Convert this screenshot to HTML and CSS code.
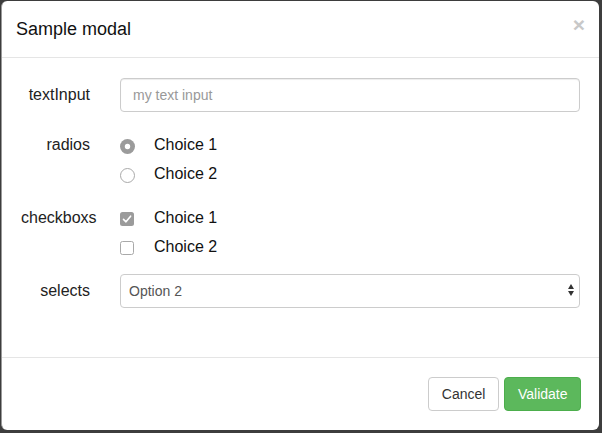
FILE: index.html
```html
<!DOCTYPE html>
<html lang="en">
<head>
<meta charset="utf-8">
<title>Sample modal</title>
<link rel="stylesheet" href="styles.css">
</head>
<body>
<div class="modal">
  <div class="modal-header">
    <h4 class="modal-title">Sample modal</h4>
    <button class="close" type="button">&times;</button>
  </div>
  <div class="modal-body">
    <div class="group group-text">
      <label class="label label-tall">textInput</label>
      <input class="input" type="text" placeholder="my text input">
    </div>
    <div class="group group-radios">
      <label class="label">radios</label>
      <div class="options">
        <div class="option">
          <svg class="mark mark-radio" width="15" height="15" viewBox="0 0 15 15"><circle cx="7.5" cy="7.5" r="7.5" fill="#9b9b9b"/><circle cx="7.5" cy="7.5" r="2.7" fill="#fff"/></svg>
          <span>Choice 1</span>
        </div>
        <div class="option">
          <svg class="mark mark-radio" width="15" height="15" viewBox="0 0 15 15"><circle cx="7.5" cy="7.5" r="7" fill="#fff" stroke="#a9a9a9" stroke-width="1"/></svg>
          <span>Choice 2</span>
        </div>
      </div>
    </div>
    <div class="group group-checks">
      <label class="label">checkboxs</label>
      <div class="options">
        <div class="option">
          <svg class="mark" width="14" height="14" viewBox="0 0 14 14"><rect x="0" y="0" width="14" height="14" rx="2.5" fill="#9b9b9b"/><polyline points="3.5,7.4 6,9.8 10.6,4.2" fill="none" stroke="#fff" stroke-width="1.6" stroke-linecap="round" stroke-linejoin="round"/></svg>
          <span>Choice 1</span>
        </div>
        <div class="option">
          <svg class="mark" width="14" height="14" viewBox="0 0 14 14"><rect x="0.5" y="0.5" width="13" height="13" rx="2" fill="#fff" stroke="#a9a9a9" stroke-width="1"/></svg>
          <span>Choice 2</span>
        </div>
      </div>
    </div>
    <div class="group group-select">
      <label class="label label-tall">selects</label>
      <div class="select-wrap">
        <select class="select">
          <option>Option 1</option>
          <option selected>Option 2</option>
          <option>Option 3</option>
        </select>
        <svg class="select-arrows" width="6" height="12" viewBox="0 0 6 12"><polygon points="3,0 6,5 0,5" fill="#333"/><polygon points="0,7 6,7 3,12" fill="#333"/></svg>
      </div>
    </div>
  </div>
  <div class="modal-footer">
    <button class="btn btn-default" type="button">Cancel</button>
    <button class="btn btn-success" type="button">Validate</button>
  </div>
</div>
</body>
</html>
```
FILE: styles.css
```css
* {
  box-sizing: border-box;
}

html, body {
  margin: 0;
  padding: 0;
}

body {
  background: #3d3d3d;
  padding: 1px 0 0 1px;
  font-family: "Liberation Sans", Arial, sans-serif;
  font-size: 14px;
  color: #333;
  width: 602px;
  height: 433px;
  overflow: hidden;
}

.modal {
  width: 598px;
  height: 429px;
  background: #fff;
  border-radius: 6px;
  border-left: 1px solid #9a9a9a;
  display: flex;
  flex-direction: column;
}

.modal-header {
  display: flex;
  justify-content: space-between;
  align-items: flex-start;
  padding: 15px 14px 15px 14px;
  border-bottom: 1px solid #e5e5e5;
  height: 57px;
}

.modal-title {
  margin: 0;
  font-size: 18px;
  font-weight: 500;
  line-height: 26px;
  color: #111;
}

.close {
  border: 0;
  background: transparent;
  padding: 0;
  margin-top: -2px;
  font-family: "Liberation Sans", Arial, sans-serif;
  font-size: 21px;
  font-weight: bold;
  line-height: 1;
  color: #c8c8c8;
}

.modal-body {
  padding: 20px 19px 49px 19px;
  height: 299px;
}

.group {
  display: grid;
  grid-template-columns: 69px 1fr;
  column-gap: 30px;
  align-items: start;
}

.group-radios {
  margin-top: 23px;
}

.group-checks {
  margin-top: 24px;
}

.group-select {
  margin-top: 17px;
}

.label {
  font-size: 16px;
  line-height: 20px;
  text-align: right;
  color: #222;
  white-space: nowrap;
}

.label-tall {
  line-height: 34px;
}

.input {
  display: block;
  width: 100%;
  height: 34px;
  padding: 6px 12px;
  font-family: "Liberation Sans", Arial, sans-serif;
  font-size: 14px;
  line-height: 20px;
  color: #555;
  background: #fff;
  border: 1px solid #ccc;
  border-radius: 4px;
  box-shadow: inset 0 1px 1px rgba(0, 0, 0, 0.075);
  outline: none;
}

.input::placeholder {
  color: #999;
}

.options {
  display: flex;
  flex-direction: column;
  gap: 9px;
}

.option {
  display: flex;
  align-items: center;
  height: 20px;
  font-size: 16px;
  line-height: 20px;
  color: #111;
}

.mark {
  flex: none;
  margin: 1px 20px 0 0;
  display: block;
}

.mark-radio {
  margin: 2px 19px 0 0;
}

.select-wrap {
  position: relative;
}

.select {
  display: block;
  width: 100%;
  height: 34px;
  padding: 6px 20px 6px 8px;
  font-family: "Liberation Sans", Arial, sans-serif;
  font-size: 14px;
  line-height: 20px;
  color: #555;
  background: #fff;
  border: 1px solid #ccc;
  border-radius: 4px;
  -webkit-appearance: none;
  appearance: none;
  outline: none;
}

.select-arrows {
  position: absolute;
  right: 6px;
  top: 10px;
  pointer-events: none;
}

.modal-footer {
  border-top: 1px solid #e5e5e5;
  padding: 19px 18px 19px 19px;
  display: flex;
  justify-content: flex-end;
  gap: 5px;
  height: 73px;
}

.btn {
  height: 34px;
  padding: 6px 12px;
  font-family: "Liberation Sans", Arial, sans-serif;
  font-size: 14px;
  line-height: 20px;
  border: 1px solid transparent;
  border-radius: 4px;
}

.btn-default {
  color: #333;
  background: #fff;
  border-color: #ccc;
  padding: 6px 13px;
}

.btn-success {
  color: #fff;
  background: #5cb85c;
  border-color: #4cae4c;
  padding: 6px 12.5px;
}
```
